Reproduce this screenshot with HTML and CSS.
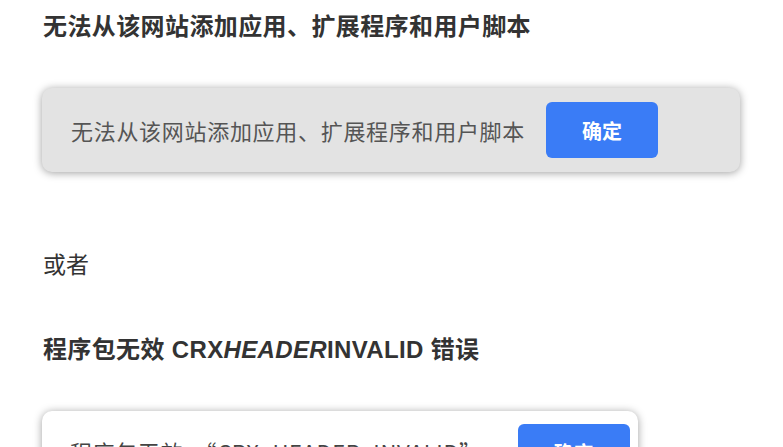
FILE: index.html
```html
<!DOCTYPE html>
<html lang="zh-CN">
<head>
<meta charset="utf-8">
<link rel="stylesheet" href="styles.css">
</head>
<body>
<main class="page">
  <h2 class="title title-first">无法从该网站添加应用、扩展程序和用户脚本</h2>
  <div class="dialog dialog-grey">
    <span class="dialog-text">无法从该网站添加应用、扩展程序和用户脚本</span>
    <button class="btn">确定</button>
  </div>
  <p class="plain">或者</p>
  <h2 class="title title-second">程序包无效 CRX<em class="it">HEADER</em>INVALID 错误</h2>
  <div class="dialog dialog-white">
    <span class="dialog-text dark">程序包无效：“CRX_HEADER_INVALID”</span>
    <button class="btn">确定</button>
  </div>
</main>
</body>
</html>
```
FILE: styles.css
```css
html, body {
  margin: 0;
  padding: 0;
  background: #ffffff;
  overflow: hidden;
}
body {
  width: 783px;
  height: 447px;
  font-family: "Liberation Sans", "Noto Sans CJK SC", sans-serif;
  color: #333333;
}
.page {
  padding: 0 0 0 42px;
}
.title {
  margin: 0;
  font-size: 24px;
  font-weight: 700;
  line-height: 32px;
  color: #333333;
}
.title-first {
  padding-top: 11px;
  letter-spacing: 0.4px;
  padding-left: 1px;
}
.title-second {
  margin-top: 55px;
  padding-left: 1px;
  letter-spacing: 0.35px;
}
.it {
  font-style: italic;
}
.dialog {
  display: flex;
  align-items: center;
  box-sizing: border-box;
  border-radius: 10px;
  box-shadow: 0 1px 8px rgba(0, 0, 0, 0.38);
}
.dialog-grey {
  margin-top: 45px;
  width: 698px;
  height: 84px;
  padding: 0 0 0 29px;
  background: #e3e3e3;
  gap: 21px;
}
.dialog-white {
  margin-top: 45px;
  width: 596px;
  height: 84px;
  padding: 13px 0 0 28px;
  background: #ffffff;
  gap: 36px;
  align-items: flex-start;
}
.dialog-text {
  font-family: "Noto Sans CJK SC", sans-serif;
  font-size: 22px;
  letter-spacing: 0.7px;
  color: #555555;
  line-height: 30px;
}
.dialog-white .dialog-text {
  margin-top: 12px;
  color: #444444;
  font-size: 22px;
  letter-spacing: 0.6px;
}
.btn {
  width: 112px;
  height: 56px;
  border: none;
  border-radius: 6px;
  background: #3a7cf6;
  color: #ffffff;
  font-family: "Noto Sans CJK SC", sans-serif;
  font-size: 20px;
  font-weight: 700;
  padding: 0;
}
.plain {
  margin: 75px 0 0 1px;
  font-family: "Noto Sans CJK SC", sans-serif;
  font-size: 23px;
  line-height: 32px;
  color: #333333;
}
```
